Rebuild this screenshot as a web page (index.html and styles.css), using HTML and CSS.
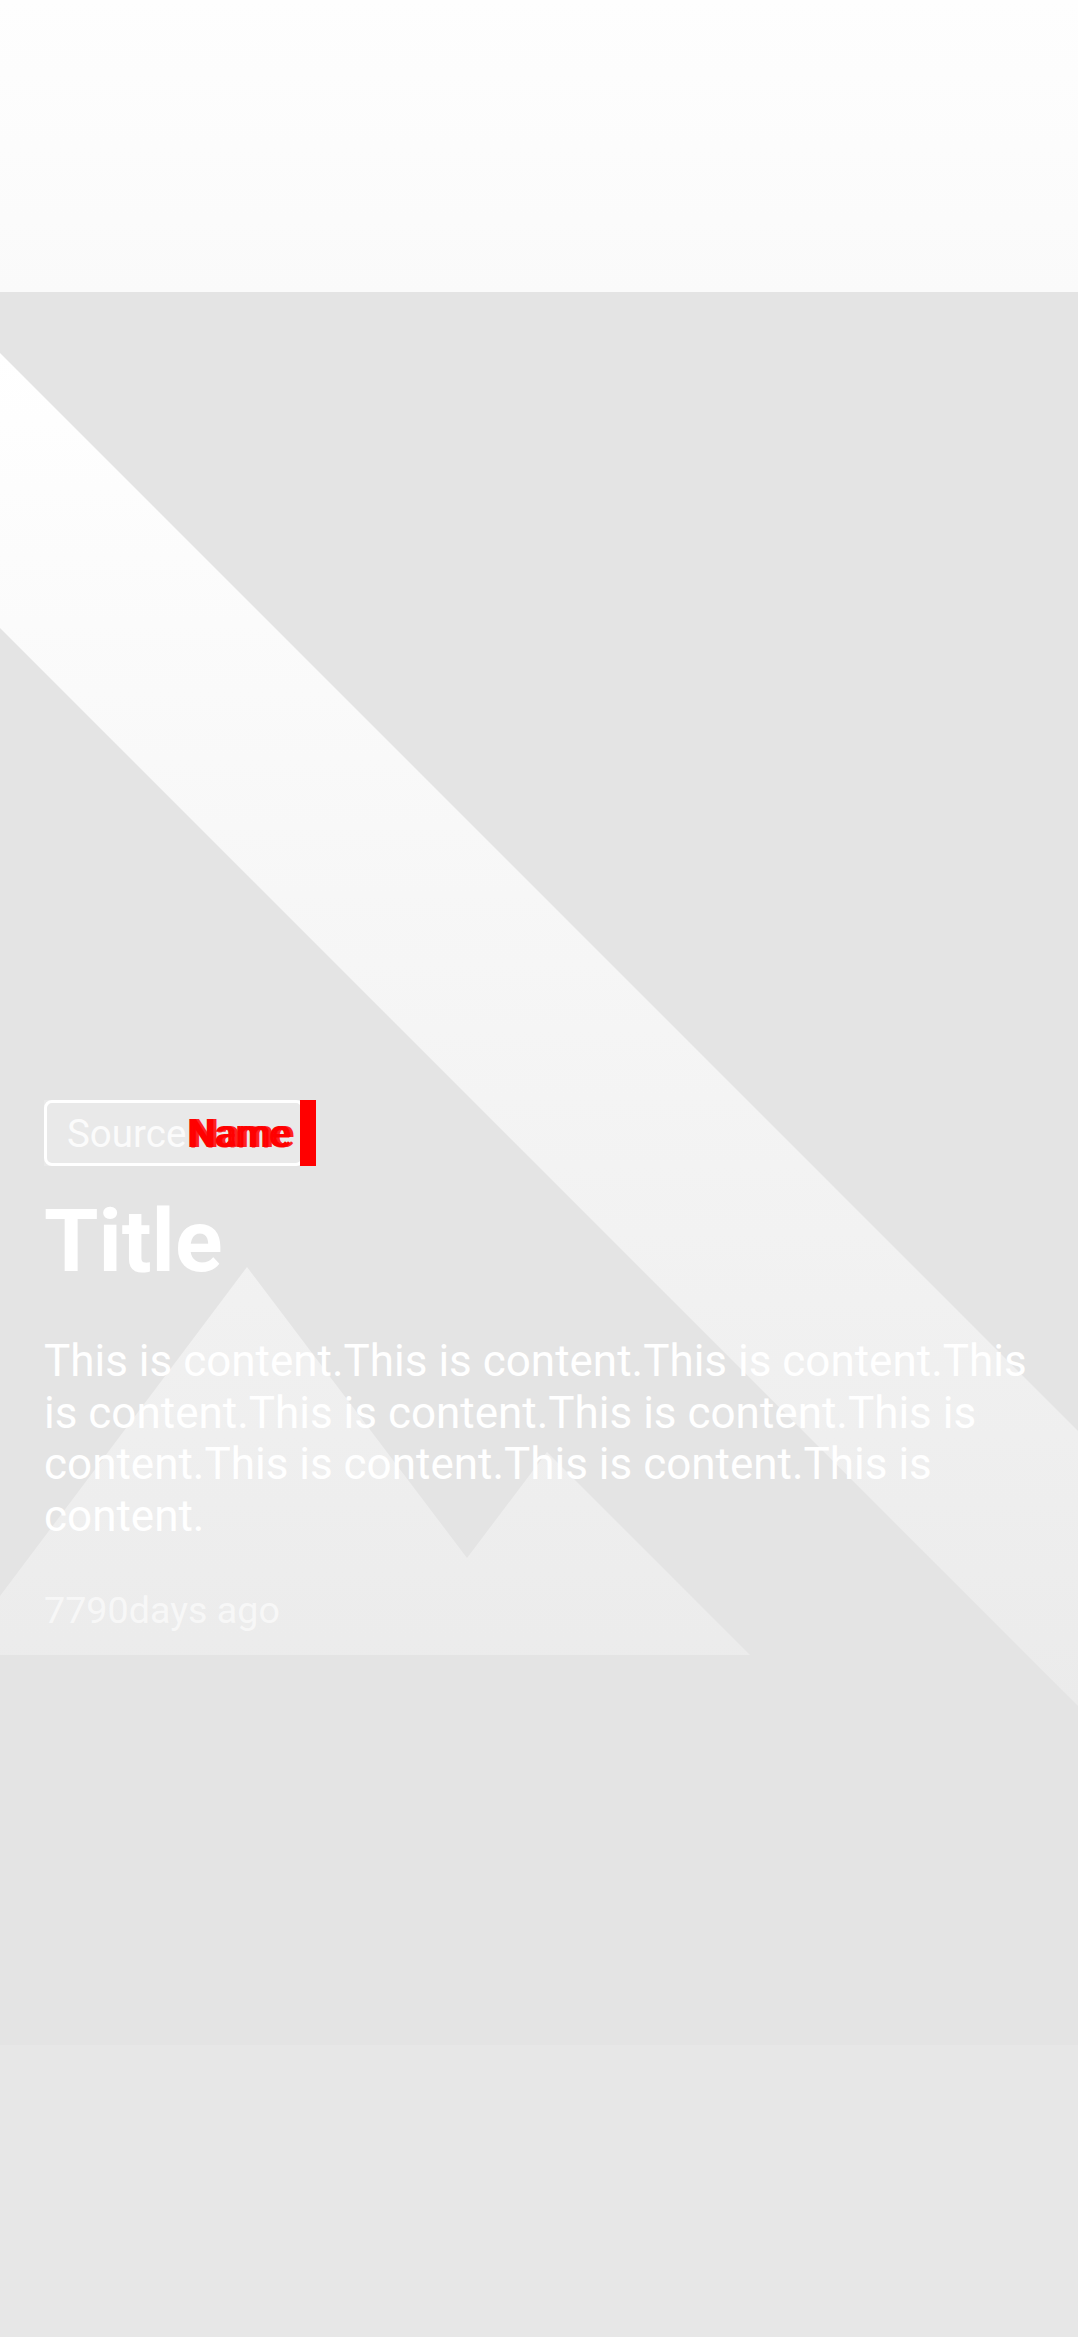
FILE: index.html
```html
<!DOCTYPE html>
<html lang="en">
<head>
<meta charset="utf-8">
<title>Article</title>
<link rel="stylesheet" href="styles.css">
</head>
<body>
<div class="topbar"></div>
<section class="hero">
  <svg class="art" width="1078" height="1753" viewBox="0 0 1078 1753" aria-hidden="true">
    <defs>
      <linearGradient id="g" x1="0" y1="61" x2="0" y2="1414" gradientUnits="userSpaceOnUse">
        <stop offset="0" stop-color="#ffffff"/>
        <stop offset="1" stop-color="#ebebeb"/>
      </linearGradient>
    </defs>
    <polygon fill="url(#g)" points="0,61 1078,1139 1078,1414 0,336"/>
    <polygon fill="url(#g)" points="0,1304 247,975 467,1266 547,1160 750,1363 0,1363"/>
  </svg>
  <div class="content">
    <div class="badge">
      <div class="badge-inner">
        <span class="source">Source</span><span class="name">Name</span>
      </div>
      <span class="overflow"></span>
    </div>
    <h1 class="title">Title</h1>
    <p class="body">This is content.This is content.This is content.This is content.This is content.This is content.This is content.This is content.This is content.This is content.</p>
    <p class="time">7790days ago</p>
  </div>
</section>
<div class="footer"></div>
</body>
</html>
```
FILE: styles.css
```css
html, body {
  margin: 0;
  padding: 0;
}
body {
  background: #e4e4e4;
  font-family: Roboto, "Liberation Sans", sans-serif;
  width: 1078px;
  overflow: hidden;
}
.topbar {
  height: 292px;
  background: linear-gradient(to bottom, #fefefe, #fafafa);
}
.hero {
  position: relative;
  height: 1753px;
  background: #e4e4e4;
}
.art {
  position: absolute;
  left: 0;
  top: 0;
  display: block;
}
.content {
  position: relative;
  padding: 808px 44px 0 44px;
}
.badge {
  position: relative;
  display: inline-block;
  background: rgba(255, 255, 255, 0.2);
  vertical-align: top;
}
.badge-inner {
  border: 3px solid #ffffff;
  border-radius: 8px;
  padding: 7.5px 12px 7.5px 20px;
  font-size: 38.5px;
  line-height: 45px;
  white-space: nowrap;
  display: flex;
}
.source {
  color: rgba(255, 255, 255, 0.85);
}
.name {
  color: #ff0000;
  font-weight: 400;
  text-shadow: 3px 0 0 #ff0000, 6px 0 0 rgba(255, 0, 0, 0.85), 2px 1px 0 rgba(255, 0, 0, 0.5);
}
.overflow {
  position: absolute;
  top: 0;
  right: -12px;
  width: 16px;
  height: 100%;
  background: #ff0000;
}
.title {
  margin: 23px 0 0 0;
  font-size: 88px;
  line-height: 103px;
  font-weight: 700;
  color: #ffffff;
}
.body {
  margin: 44px 0 0 0;
  font-size: 44px;
  line-height: 51.5px;
  color: #ffffff;
}
.time {
  margin: 46px 0 0 0;
  font-size: 37.7px;
  line-height: 45px;
  color: rgba(255, 255, 255, 0.6);
}
.footer {
  height: 292px;
  background: #e7e7e7;
}
```
